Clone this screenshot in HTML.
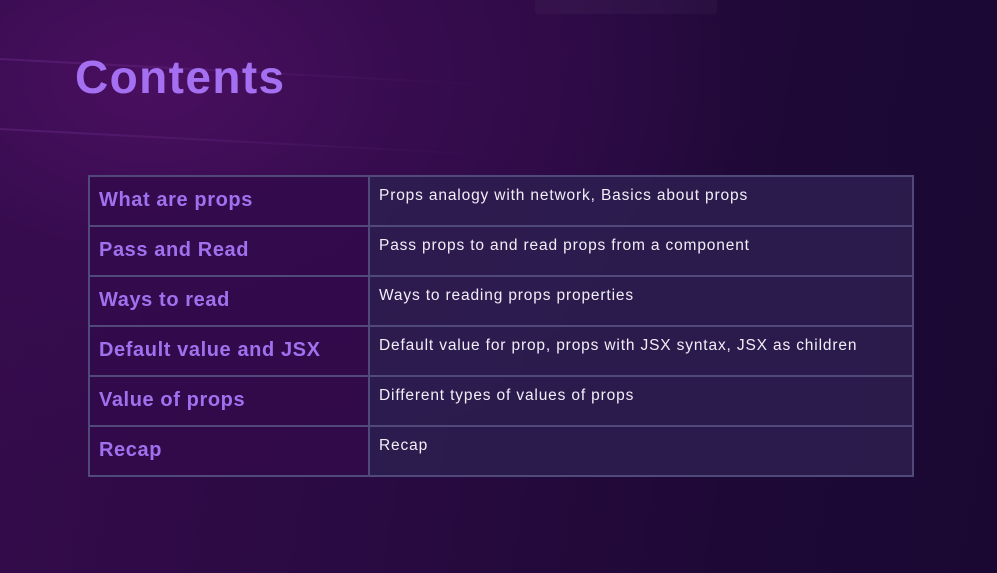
<!DOCTYPE html>
<html><head><meta charset="utf-8"><style>
html,body{margin:0;padding:0}
body{width:997px;height:573px;overflow:hidden;position:relative;font-family:"Liberation Sans",sans-serif;
background:radial-gradient(ellipse 600px 400px at 150px 80px,#4a0f60 0%,#360c4e 45%,rgba(40,10,60,0) 100%),linear-gradient(100deg,#360b4c 0%,#2a0a42 40%,#1e0936 75%,#1a0832 100%);}
.bar{position:absolute;left:0;width:500px;height:2px;background:linear-gradient(90deg,rgba(160,80,200,.2),rgba(160,80,200,0));transform-origin:left;}
h1{position:absolute;left:75px;top:50px;margin:0;font-size:46px;font-weight:bold;color:#a46ff0;letter-spacing:1.4px}
table{position:absolute;left:88px;top:175px;border-collapse:collapse;width:826px}
tr{height:50px}
td{border:2px solid #4f4a7a;height:50px;box-sizing:border-box;vertical-align:top;padding:0}
td.l{width:280px;background:rgba(50,10,75,.85);color:#a071ee;font-weight:bold;font-size:20px;padding:12px 0 0 9px;letter-spacing:0.6px}
td.r{background:rgba(45,30,80,.85);color:#f2eef8;font-size:15.5px;padding:10px 0 0 9px;letter-spacing:0.85px}
.esc{position:absolute;left:535px;top:-8px;width:182px;height:22px;background:rgba(255,255,255,.03);border-radius:3px}
</style></head><body>
<div class="bar" style="top:58px;transform:rotate(3deg)"></div>
<div class="bar" style="top:128px;transform:rotate(3deg)"></div>
<div class="esc"></div>
<h1>Contents</h1>
<table>
<tr><td class="l">What are props</td><td class="r">Props analogy with network, Basics about props</td></tr>
<tr><td class="l">Pass and Read</td><td class="r">Pass props to and read props from a component</td></tr>
<tr><td class="l">Ways to read</td><td class="r">Ways to reading props properties</td></tr>
<tr><td class="l">Default value and JSX</td><td class="r">Default value for prop, props with JSX syntax, JSX as children</td></tr>
<tr><td class="l">Value of props</td><td class="r">Different types of values of props</td></tr>
<tr><td class="l">Recap</td><td class="r">Recap</td></tr>
</table>
</body></html>
